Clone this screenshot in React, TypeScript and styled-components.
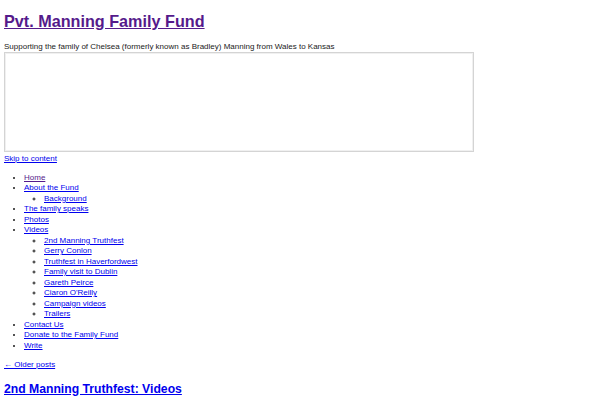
import React from 'react';
import styled, { createGlobalStyle } from 'styled-components';

const GlobalStyle = createGlobalStyle`
  html, body {
    margin: 0;
    padding: 0;
    background: #fff;
  }
  body {
    padding: 4px;
    font-family: "Liberation Sans", Arial, sans-serif;
    font-size: 8px;
    line-height: 10.5px;
    color: #1a1a1a;
  }
  a {
    color: #0000ee;
  }
`;

const Page = styled.div`
  display: flex;
  flex-direction: column;
`;

const SiteTitle = styled.h1`
  margin: 7px 0 0;
  font-size: 16.2px;
  line-height: 20px;
  font-weight: bold;

  a {
    color: #551a8b;
  }
`;

const Tagline = styled.p`
  margin: 11px 0 0;
  line-height: 10px;
`;

const Frame = styled.div`
  width: 468px;
  height: 98px;
  border: 1px solid #d4d4d4;
  box-shadow: inset 0 0 0 1px #f0f0f0;
  background: #fff;
`;

const SkipLink = styled.a`
  margin-top: 2px;
  align-self: flex-start;
`;

const Menu = styled.ul<{ $sub?: boolean }>`
  margin: ${(p) => (p.$sub ? '0' : '8px 0 0')};
  padding-left: 20px;
  list-style: ${(p) => (p.$sub ? 'circle' : 'disc')};
`;

const MenuItem = styled.li<{ $current?: boolean }>`
  a {
    color: ${(p) => (p.$current ? '#551a8b' : '#0000ee')};
  }
`;

const OlderPosts = styled.a`
  margin-top: 9px;
  align-self: flex-start;
`;

const PostTitle = styled.h2`
  margin: 10px 0 0;
  font-size: 12.2px;
  line-height: 16px;
  font-weight: bold;
`;

const videos = [
  '2nd Manning Truthfest',
  'Gerry Conlon',
  'Truthfest in Haverfordwest',
  'Family visit to Dublin',
  'Gareth Peirce',
  "Ciaron O'Reilly",
  'Campaign videos',
  'Trailers',
];

const App: React.FC = () => (
  <>
    <GlobalStyle />
    <Page>
      <SiteTitle>
        <a href="#">Pvt. Manning Family Fund</a>
      </SiteTitle>
      <Tagline>Supporting the family of Chelsea (formerly known as Bradley) Manning from Wales to Kansas</Tagline>
      <Frame />
      <SkipLink href="#content">Skip to content</SkipLink>
      <Menu>
        <MenuItem $current>
          <a href="#">Home</a>
        </MenuItem>
        <MenuItem>
          <a href="#">About the Fund</a>
          <Menu $sub>
            <MenuItem>
              <a href="#">Background</a>
            </MenuItem>
          </Menu>
        </MenuItem>
        <MenuItem>
          <a href="#">The family speaks</a>
        </MenuItem>
        <MenuItem>
          <a href="#">Photos</a>
        </MenuItem>
        <MenuItem>
          <a href="#">Videos</a>
          <Menu $sub>
            {videos.map((v) => (
              <MenuItem key={v}>
                <a href="#">{v}</a>
              </MenuItem>
            ))}
          </Menu>
        </MenuItem>
        <MenuItem>
          <a href="#">Contact Us</a>
        </MenuItem>
        <MenuItem>
          <a href="#">Donate to the Family Fund</a>
        </MenuItem>
        <MenuItem>
          <a href="#">Write</a>
        </MenuItem>
      </Menu>
      <OlderPosts href="#">← Older posts</OlderPosts>
      <PostTitle id="content">
        <a href="#">2nd Manning Truthfest: Videos</a>
      </PostTitle>
    </Page>
  </>
);

export default App;
